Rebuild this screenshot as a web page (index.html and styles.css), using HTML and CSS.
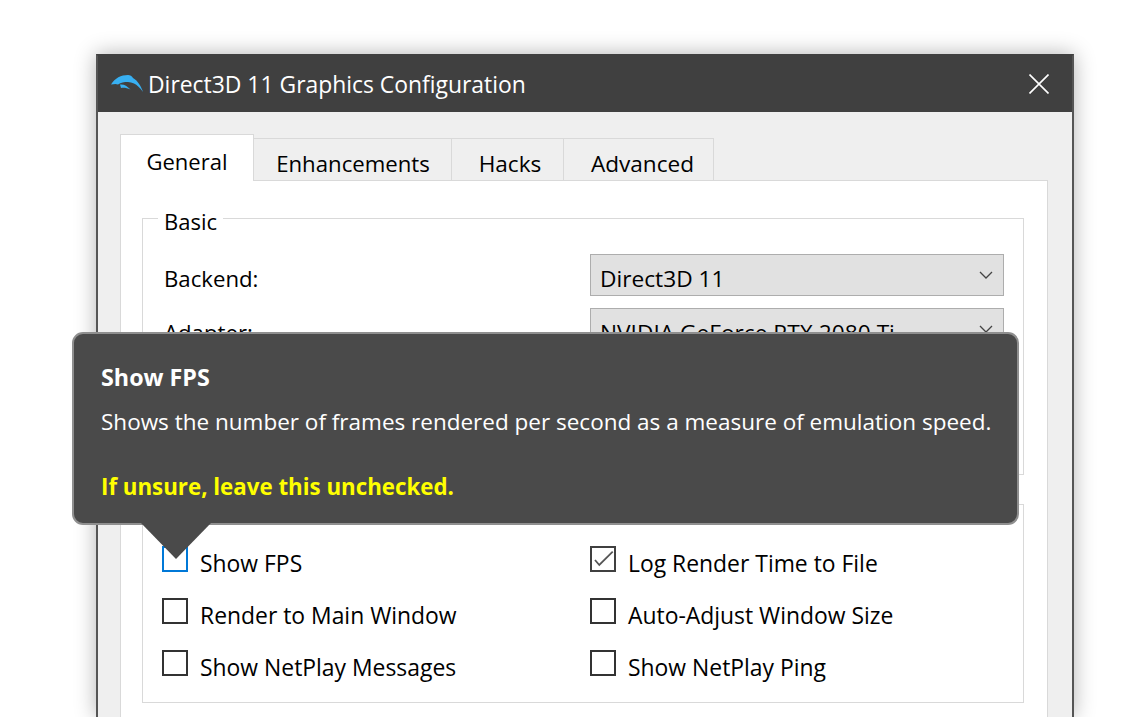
FILE: index.html
```html
<!DOCTYPE html>
<html lang="en">
<head>
    <meta charset="UTF-8">
    <title>Direct3D 11 Graphics Configuration</title>
    <link rel="stylesheet" href="styles.css">
</head>
<body>
    <div class="window">
        <div class="titlebar">
            <svg class="logo" width="34" height="20" viewBox="0 0 34 20">
                <path fill="#38b0f2" d="M1 10.5 C5 4 11 1 18 1 C20 1 22 2 23 4 C28 7 31 12 33 18 C30 13.5 27 11 24 9.5 C22 8.5 20 8 18 8 C14 8 11 8.5 8 10.5 C6 9.5 4 10 1 10.5 Z"/>
                <path fill="#38b0f2" d="M10 10.5 C14 10 17 12 20.5 15.5 C17 14 14 13.5 11 14 Z"/>
            </svg>
            <span class="title">Direct3D 11 Graphics Configuration</span>
            <svg class="close" width="20" height="20" viewBox="0 0 20 20">
                <path d="M0.5 0.5 L19.5 19.5 M19.5 0.5 L0.5 19.5" stroke="#fff" stroke-width="1.6" fill="none"/>
            </svg>
        </div>
        <div class="client">
            <div class="tabs">
                <div class="tab active">General</div>
                <div class="tab tab-enh">Enhancements</div>
                <div class="tab tab-hacks">Hacks</div>
                <div class="tab tab-adv">Advanced</div>
            </div>
            <div class="pane">
                <div class="group basic">
                    <div class="legend">Basic</div>
                    <div class="row">
                        <span class="row-label">Backend:</span>
                        <div class="select">Direct3D 11
                            <svg class="chevron" width="14" height="8" viewBox="0 0 14 8"><path d="M1 1 L7 7 L13 1" stroke="#444" stroke-width="1.3" fill="none"/></svg>
                        </div>
                    </div>
                    <div class="row">
                        <span class="row-label">Adapter:</span>
                        <div class="select">NVIDIA GeForce RTX 2080 Ti
                            <svg class="chevron" width="14" height="8" viewBox="0 0 14 8"><path d="M1 1 L7 7 L13 1" stroke="#444" stroke-width="1.3" fill="none"/></svg>
                        </div>
                    </div>
                </div>
                <div class="group other">
                    <div class="checks">
                        <label class="check"><i class="box box-focus"></i>Show FPS</label>
                        <label class="check"><i class="box box-on"><svg width="22" height="22" viewBox="0 0 22 22"><path d="M3 12 L7.3 17 L20.7 3.7" stroke="#555" stroke-width="1.8" fill="none"/></svg></i>Log Render Time to File</label>
                        <label class="check"><i class="box"></i>Render to Main Window</label>
                        <label class="check"><i class="box"></i>Auto-Adjust Window Size</label>
                        <label class="check"><i class="box"></i>Show NetPlay Messages</label>
                        <label class="check"><i class="box"></i>Show NetPlay Ping</label>
                    </div>
                </div>
            </div>
        </div>
    </div>

    <div class="tooltip">
        <div class="tip-title">Show FPS</div>
        <div class="tip-text">Shows the number of frames rendered per second as a measure of emulation speed.</div>
        <div class="tip-warn">If unsure, leave this unchecked.</div>
    </div>
    <svg class="tip-arrow" width="72" height="38" viewBox="0 0 72 38">
        <path d="M1 0 L36 36 L71 0 Z" fill="#4a4a4a"/>
    </svg>
</body>
</html>
```

FILE: styles.css
```css
* {
    margin: 0;
    padding: 0;
    box-sizing: border-box;
}

html, body {
    height: 717px;
    overflow: hidden;
    background-color: #fff;
}

body {
    padding: 54px 72px 0 96px;
    font-family: "Open Sans", "Noto Sans", sans-serif;
    font-size: 22px;
    color: #000;
}

.window {
    width: 978px;
    height: 663px;
    border: 2px solid #555;
    border-top-color: #404040;
    border-bottom: 0;
    background-color: #efefef;
    box-shadow: 0 0 20px rgba(0, 0, 0, 0.3);
}

.titlebar {
    height: 56px;
    display: flex;
    align-items: center;
    padding: 0 23px 0 12px;
    background-color: #404040;
    color: #fff;
}

.logo {
    flex-shrink: 0;
}

.title {
    margin-left: 4px;
    font-size: 22.9px;
    flex: 1;
}

.client {
    padding: 22px 24px 0 22px;
}

.tabs {
    display: flex;
    align-items: flex-end;
    height: 47px;
    position: relative;
    z-index: 1;
    margin-bottom: -1px;
}

.tab {
    height: 43px;
    display: flex;
    align-items: center;
    justify-content: center;
    padding-top: 7px;
    border: 1px solid #d9d9d9;
    border-left-width: 0;
}

.tab.active {
    width: 134px;
    height: 47px;
    padding-top: 6px;
    border-left-width: 1px;
    border-bottom: 0;
    background-color: #fff;
}

.tab-enh {
    width: 198px;
    padding-left: 1px;
    font-size: 22.2px;
}

.tab-hacks {
    width: 112px;
    padding-left: 5px;
    font-size: 22.6px;
}

.tab-adv {
    width: 150px;
    padding-left: 8px;
    font-size: 22.6px;
}

.pane {
    height: 537px;
    padding: 37px 23px 0 21px;
    border: 1px solid #d9d9d9;
    border-bottom: 0;
    background-color: #fff;
}

.group {
    border: 1px solid #d9d9d9;
}

.basic {
    height: 257px;
    padding: 35px 19px 0 21px;
    position: relative;
}

.legend {
    position: absolute;
    left: 15px;
    top: -11px;
    padding: 0 6px;
    line-height: 26px;
    background-color: #fff;
}

.row {
    display: flex;
    justify-content: space-between;
    align-items: center;
    height: 42px;
    margin-bottom: 12px;
    font-size: 22.2px;
}

.row-label {
    padding-top: 6px;
}

.select {
    width: 414px;
    height: 42px;
    display: flex;
    justify-content: space-between;
    align-items: center;
    padding: 6px 10px 0 9px;
    border: 1px solid #adadad;
    background-color: #e1e1e1;
    font-size: 22.7px;
}

.chevron {
    margin-top: -6px;
}

.other {
    height: 199px;
    margin-top: 29px;
    padding: 41px 0 0 19px;
}

.checks {
    display: grid;
    grid-template-columns: 428px 1fr;
    row-gap: 26px;
}

.check {
    display: flex;
    height: 26px;
    line-height: 36px;
    font-size: 22.9px;
    white-space: nowrap;
}

.box {
    width: 26px;
    height: 26px;
    margin-right: 12px;
    border: 2px solid #333;
    flex-shrink: 0;
}

.box-focus {
    border-color: #0078d7;
}

.box-on {
    border-color: #404040;
}

.box-on svg {
    display: block;
}

.tooltip {
    position: absolute;
    left: 72px;
    top: 332px;
    width: 947px;
    height: 193px;
    padding: 27px 0 0 27px;
    border: 2px solid #8f8f8f;
    border-radius: 11px;
    background-color: #4a4a4a;
    color: #fff;
}

.tip-title {
    font-size: 23.3px;
    font-weight: 700;
    line-height: 32px;
}

.tip-text {
    margin-top: 13px;
    font-size: 22.5px;
    line-height: 32px;
    white-space: nowrap;
}

.tip-warn {
    margin-top: 33px;
    font-size: 22.3px;
    font-weight: 700;
    line-height: 32px;
    color: #ff0;
}

.tip-arrow {
    position: absolute;
    left: 140px;
    top: 523px;
}
```
